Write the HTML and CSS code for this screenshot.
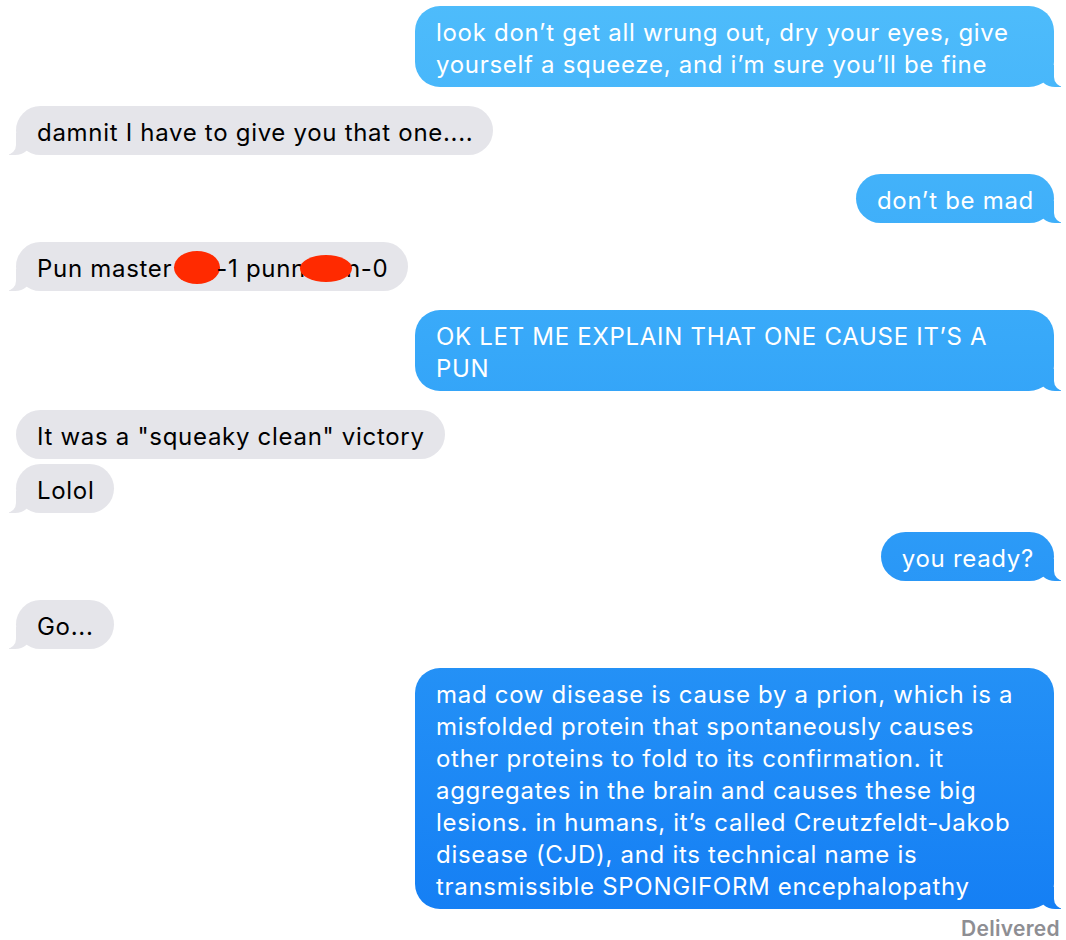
FILE: index.html
```html
<!DOCTYPE html>
<html lang="en">
<head>
    <meta charset="UTF-8">
    <title>Messages</title>
    <link rel="stylesheet" href="styles.css">
</head>
<body>
    <div class="thread">
        <div class="msg out tail">look don’t get all wrung out, dry your eyes, give yourself a squeeze, and i’m sure you’ll be fine</div>

        <div class="msg in tail">damnit I have to give you that one....</div>

        <div class="msg out tail">don’t be mad</div>

        <div class="msg in tail">Pun master<span class="redact r1"></span>-1 punn<span class="redact r2"></span>n-0</div>

        <div class="msg out tail">OK LET ME EXPLAIN THAT ONE CAUSE IT’S A PUN</div>

        <!-- same sender, stacked -->
        <div class="msg in">It was a "squeaky clean" victory</div>
        <div class="msg in tail same">Lolol</div>

        <div class="msg out tail">you ready?</div>

        <div class="msg in tail">Go...</div>

        <div class="msg out tail">mad cow disease is cause by a prion, which is a misfolded protein that spontaneously causes other proteins to fold to its confirmation. it aggregates in the brain and causes these big lesions. in humans, it’s called Creutzfeldt-Jakob disease (CJD), and its technical name is transmissible SPONGIFORM encephalopathy</div>

        <div class="status">Delivered</div>
    </div>
</body>
</html>
```

FILE: styles.css
```css
body {
    margin: 0;
    background: #fff;
    font-family: Inter, "Noto Sans", sans-serif;
}

.thread {
    display: flex;
    flex-direction: column;
    gap: 19px;
    padding: 6px 12px 0 16px;
}

.msg {
    position: relative;
    max-width: 639px;
    box-sizing: border-box;
    padding: 11px 20px 6px 21px;
    border-radius: 25px;
    font-size: 24px;
    line-height: 32px;
    letter-spacing: 0.7px;
}

.msg.same {
    margin-top: -14px;
}

.in {
    align-self: flex-start;
    background: #e5e5ea;
    color: #000;
}

.out {
    align-self: flex-end;
    color: #fff;
    background: linear-gradient(to bottom, #4ebcfb 0px, #37a8f9 350px, #2592f6 650px, #137df4 940px) fixed;
}

/* bubble tails */
.tail::before,
.tail::after {
    content: "";
    position: absolute;
    bottom: 0;
    height: 22px;
}

.out.tail::before {
    right: -7px;
    width: 22px;
    background: inherit;
    border-bottom-left-radius: 16px 14px;
}

.out.tail::after {
    right: -26px;
    width: 26px;
    background: #fff;
    border-bottom-left-radius: 10px;
}

.in.tail::before {
    left: -7px;
    width: 22px;
    background: #e5e5ea;
    border-bottom-right-radius: 16px 14px;
}

.in.tail::after {
    left: -26px;
    width: 26px;
    background: #fff;
    border-bottom-right-radius: 10px;
}

.redact {
    display: inline-block;
    background: #ff2a00;
    border-radius: 50%;
    vertical-align: middle;
}

.r1 {
    width: 46px;
    height: 33px;
    margin: -6px -4px 0 2px;
}

.r2 {
    width: 52px;
    height: 27px;
    margin: -4px -6px 0 -6px;
    position: relative;
    z-index: 1;
}

.status {
    align-self: flex-end;
    margin: -12px -6px 0 0;
    font-size: 21px;
    font-weight: 600;
    letter-spacing: 0.3px;
    color: #8e8e93;
}
```
